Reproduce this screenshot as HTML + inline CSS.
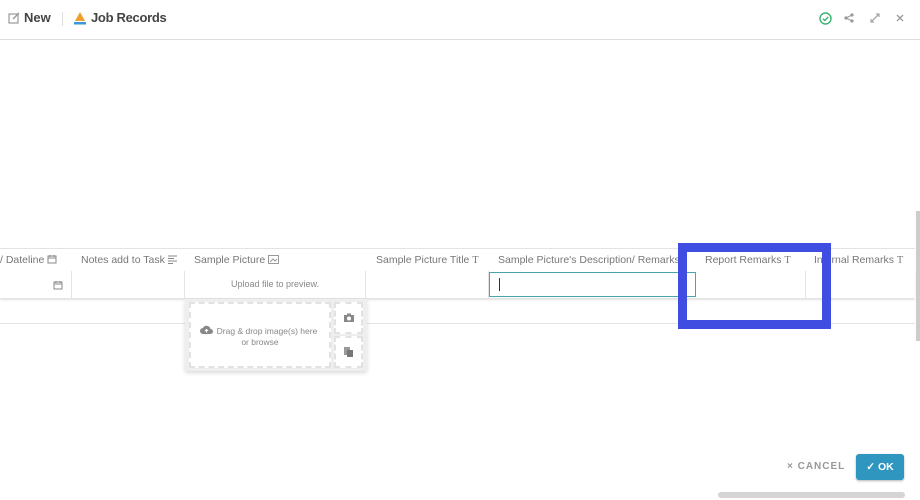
<!DOCTYPE html>
<html><head><meta charset="utf-8"><style>
*{box-sizing:border-box;margin:0;padding:0}
body{width:920px;height:500px;overflow:hidden;background:#fff;font-family:"Liberation Sans",sans-serif;position:relative;color:#555}
.top{position:absolute;left:0;top:0;width:920px;height:40px;border-bottom:1px solid #ddd;background:#fff}
.t{position:absolute;top:10px;font-size:13px;font-weight:bold;color:#444}
.hd{position:absolute;top:248px;left:0;width:915px;height:24px;border-top:1px solid #e3e3e3;border-bottom:1px solid #e8e8e8;background:#fff}
.hd span{position:absolute;top:5px;font-size:10.5px;color:#777;white-space:nowrap}
.hd svg{vertical-align:-1px}
.row{position:absolute;top:271px;left:0;width:915px;height:27px;background:#fff;box-shadow:0 2px 2px rgba(0,0,0,.12)}
.c{position:absolute;top:0;height:27px;border-right:1px solid #e3e3e3}
.r2{position:absolute;top:298px;left:0;width:915px;height:26px;border-bottom:1px solid #e3e3e3}
.Ti{font-family:"Liberation Serif",serif;font-size:13px;color:#888}
</style></head><body>
<div class="top">
<svg style="position:absolute;left:8px;top:12px" width="12" height="12" viewBox="0 0 12 12"><rect x="1" y="2" width="9" height="9" fill="none" stroke="#999" stroke-width="1.2"/><path d="M5 7L11 1" stroke="#999" stroke-width="1.4"/></svg>
<div class="t" style="left:24px">New</div>
<div style="position:absolute;left:62px;top:12px;width:1px;height:14px;background:#ddd"></div>
<svg style="position:absolute;left:73px;top:11px" width="14" height="15" viewBox="0 0 14 15"><path d="M7 1L12 10H2Z" fill="#f0a030"/><rect x="1" y="11" width="12" height="2.5" fill="#3a9ad9"/></svg>
<div class="t" style="left:91px;letter-spacing:-0.3px">Job Records</div>
<svg style="position:absolute;left:819px;top:12px" width="13" height="13" viewBox="0 0 13 13"><circle cx="6.5" cy="6.5" r="5.5" fill="none" stroke="#3cb371" stroke-width="1.4"/><path d="M4 6.7l1.8 1.8L9.2 5" fill="none" stroke="#3cb371" stroke-width="1.4"/></svg>
<svg style="position:absolute;left:844px;top:13px" width="10" height="10" viewBox="0 0 10 10"><circle cx="8" cy="2" r="1.6" fill="#999"/><circle cx="2" cy="5" r="1.6" fill="#999"/><circle cx="8" cy="8" r="1.6" fill="#999"/><path d="M8 2L2 5L8 8" stroke="#999" fill="none"/></svg>
<svg style="position:absolute;left:870px;top:13px" width="10" height="10" viewBox="0 0 10 10"><path d="M1 9L9 1M6 1h3v3M1 6v3h3" stroke="#aaa" fill="none" stroke-width="1.3"/></svg>
<svg style="position:absolute;left:896px;top:14px" width="8" height="8" viewBox="0 0 8 8"><path d="M1 1L7 7M7 1L1 7" stroke="#999" stroke-width="1.3"/></svg>
</div>
<div class="hd">
<span style="left:0">/ Dateline <svg width="10" height="10" viewBox="0 0 10 10"><rect x="1" y="2" width="8" height="7" fill="none" stroke="#888"/><path d="M3 1v2M7 1v2M1 4h8" stroke="#888"/></svg></span>
<span style="left:81px">Notes add to Task <svg width="10" height="9" viewBox="0 0 10 9"><path d="M0 1h9M0 3.5h6M0 6h9M0 8.5h5" stroke="#888"/></svg></span>
<span style="left:194px">Sample Picture <svg width="11" height="9" viewBox="0 0 11 9"><rect x=".5" y=".5" width="10" height="8" fill="none" stroke="#999"/><path d="M2 7l3-3 2 2 2-2" stroke="#999" fill="none"/></svg></span>
<span style="left:376px">Sample Picture Title <span class="Ti" style="position:static">T</span></span>
<span style="left:498px">Sample Picture's Description/ Remarks</span>
<span style="left:705px">Report Remarks <span class="Ti" style="position:static">T</span></span>
<span style="left:814px">Internal Remarks <span class="Ti" style="position:static">T</span></span>
</div>
<div class="row">
<div class="c" style="left:0;width:72px"><svg style="position:absolute;left:53px;top:9px" width="10" height="10" viewBox="0 0 10 10"><rect x="1" y="2" width="8" height="7" fill="none" stroke="#888"/><path d="M3 1v2M7 1v2M1 4h8" stroke="#888"/></svg></div>
<div class="c" style="left:72px;width:113px"></div>
<div class="c" style="left:185px;width:181px;text-align:center;font-size:9px;color:#888;line-height:27px">Upload file to preview.</div>
<div class="c" style="left:366px;width:123px"></div>
<div class="c" style="left:489px;width:207px;border:1px solid #4aa3b0;height:25px;top:1px"><div style="position:absolute;left:9px;top:5px;width:1px;height:13px;background:#333"></div></div>
<div class="c" style="left:696px;width:110px"></div>
</div>
<div class="r2"></div>
<div style="position:absolute;left:185px;top:299px;width:182px;height:72px;background:#eee;box-shadow:0 2px 4px rgba(0,0,0,.15)">
<div style="position:absolute;left:4px;top:3px;width:142px;height:66px;background:#fff;border:2px dashed #e2e2e2;font-size:8.5px;color:#888;text-align:center;padding-top:22px;line-height:11px"><svg style="position:absolute;left:9px;top:21px" width="13" height="9" viewBox="0 0 13 9"><path d="M3 9a3 3 0 0 1 0-6a4 4 0 0 1 7.5 1a2.5 2.5 0 0 1 0 5z" fill="#888"/><path d="M6.5 7.5v-3M5 6l1.5-1.5L8 6" stroke="#fff" fill="none"/></svg><span style="padding-left:14px">Drag &amp; drop image(s) here</span><br>or browse</div>
<div style="position:absolute;left:149px;top:3px;width:29px;height:32px;background:#fff;border:2px dashed #e2e2e2"><svg style="position:absolute;left:8px;top:9px" width="10" height="9" viewBox="0 0 10 9"><rect x="0" y="2" width="10" height="7" fill="#888"/><rect x="3" y="0.5" width="4" height="2" fill="#888"/><circle cx="5" cy="5.5" r="2" fill="#fff"/></svg></div>
<div style="position:absolute;left:149px;top:37px;width:29px;height:32px;background:#fff;border:2px dashed #e2e2e2"><svg style="position:absolute;left:8px;top:9px" width="10" height="10" viewBox="0 0 10 10"><rect x="0" y="0" width="6" height="8" fill="#999"/><rect x="3" y="3" width="6" height="7" fill="#777"/></svg></div>
</div>
<div style="position:absolute;left:678px;top:243px;width:153px;height:86px;border:9px solid #3f4de0"></div>
<div style="position:absolute;left:916px;top:211px;width:4px;height:130px;background:#ccc"></div>
<div style="position:absolute;left:787px;top:461px;font-size:10px;font-weight:bold;color:#999;letter-spacing:1px">× CANCEL</div>
<div style="position:absolute;left:856px;top:454px;width:48px;height:26px;background:#2f96c0;border-radius:3px;color:#fff;font-size:10.5px;font-weight:bold;line-height:26px;text-align:center;box-shadow:0 1px 2px rgba(0,0,0,.3)">✓ OK</div>
<div style="position:absolute;left:718px;top:492px;width:187px;height:6px;border-radius:3px;background:#d5d5d5"></div>
</body></html>
